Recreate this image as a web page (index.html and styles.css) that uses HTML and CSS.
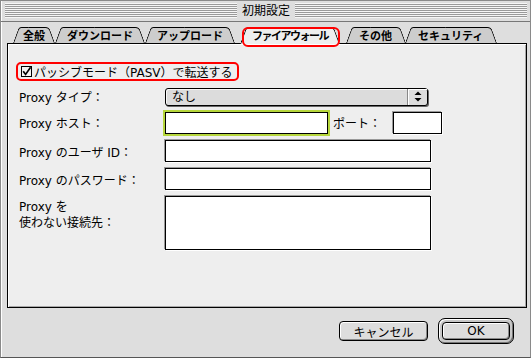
FILE: index.html
```html
<!DOCTYPE html>
<html lang="ja">
<head>
    <meta charset="UTF-8">
    <title>初期設定</title>
    <link rel="stylesheet" href="styles.css">
</head>
<body>
    <div class="window">
        <div class="titlebar">
            <div class="stripes"><span class="title">初期設定</span></div>
        </div>

        <div class="tabs">
            <div class="tab first">全般</div>
            <div class="tab">ダウンロード</div>
            <div class="tab">アップロード</div>
            <div class="tab active">ファイアウォール<span class="ring"></span></div>
            <div class="tab">その他</div>
            <div class="tab">セキュリティ</div>
        </div>

        <div class="panel">
            <label class="pasv">
                <svg class="check" width="11" height="11" viewBox="0 0 11 11">
                    <rect x="0.5" y="0.5" width="10" height="10" fill="#f4f4f4" stroke="#000"/>
                    <path d="M2.2 5.2 L4.6 8.4 L9.6 1.2" fill="none" stroke="#000" stroke-width="1.7"/>
                </svg>
                パッシブモード（PASV）で転送する
            </label>

            <div class="form">
                <div class="row row-popup">
                    <span class="label">Proxy タイプ：</span>
                    <div class="popup">
                        <span class="popup-text">なし</span>
                        <span class="popup-arrows">
                            <svg width="8" height="11" viewBox="0 0 8 11">
                                <polygon points="4,0.5 7.5,4 0.5,4" fill="#000"/>
                                <polygon points="0.5,7 7.5,7 4,10.5" fill="#000"/>
                            </svg>
                        </span>
                    </div>
                </div>
                <div class="row row-host">
                    <span class="label">Proxy ホスト：</span>
                    <div class="field field-host focused"></div>
                    <span class="port-label">ポート：</span>
                    <div class="field field-port"></div>
                </div>
                <div class="row row-field">
                    <span class="label">Proxy のユーザ ID：</span>
                    <div class="field field-wide"></div>
                </div>
                <div class="row row-field">
                    <span class="label">Proxy のパスワード：</span>
                    <div class="field field-wide"></div>
                </div>
                <div class="row row-area">
                    <span class="label label-area">Proxy を<br>使わない接続先：</span>
                    <div class="field field-wide field-area"></div>
                </div>
            </div>
        </div>

        <div class="buttons">
            <button class="btn btn-cancel">キャンセル</button>
            <div class="btn-default"><button class="btn btn-ok">OK</button></div>
        </div>
    </div>
</body>
</html>
```

FILE: styles.css
```css
body {
    margin: 0;
    font-family: "DejaVu Sans", "Noto Sans CJK JP", sans-serif;
    font-size: 12px;
    color: #000;
    background: #dedede;
}

.window {
    width: 531px;
    height: 358px;
    box-sizing: border-box;
    background: #dedede;
    border: 1px solid #8a8a8a;
    border-bottom-color: #555;
    box-shadow: inset 1px 0 0 #fff;
    display: flex;
    flex-direction: column;
}

/* Title bar */
.titlebar {
    height: 21px;
    box-sizing: border-box;
    padding: 2px 3px 3px 4px;
    border-bottom: 1px solid #777;
    display: flex;
}
.stripes {
    flex: 1;
    display: flex;
    justify-content: center;
    align-items: center;
    background: repeating-linear-gradient(to bottom, #f6f6f6 0 1px, #9a9a9a 1px 2px);
}
.title {
    background: #dedede;
    padding: 0 5px;
    line-height: 16px;
    font-size: 12px;
}

/* Tabs */
.tabs {
    display: flex;
    height: 16px;
    margin: 5px 0 0 12px;
}
.tab {
    position: relative;
    z-index: 0;
    height: 16px;
    padding: 0 12px;
    line-height: 17px;
    font-size: 11px;
    font-weight: bold;
    font-family: "Noto Sans CJK JP", sans-serif;
    white-space: nowrap;
}
.tab.first {
    padding: 0 10px;
}
.tab.active ~ .tab {
    padding: 0 13px;
}
.tab::before,
.tab::after {
    content: '';
    position: absolute;
    top: 0;
    bottom: 0;
    z-index: -1;
    background: #cdcdcd;
    border-top: 1px solid #000;
}
.tab::before {
    left: 0;
    right: 50%;
    border-left: 1px solid #000;
    transform: skewX(-20deg);
    transform-origin: bottom left;
    border-top-left-radius: 3px;
}
.tab::after {
    left: 50%;
    right: 0;
    border-right: 1px solid #000;
    transform: skewX(20deg);
    transform-origin: bottom right;
    border-top-right-radius: 4px;
}
.tab.active {
    z-index: 1;
    height: 17px;
    margin: 0 6px -1px 5px;
    align-self: flex-start;
    letter-spacing: -1.5px;
}
.tab.active::before,
.tab.active::after {
    background: #eeeeee;
}
.ring {
    position: absolute;
    left: 2px;
    right: 0;
    top: 0;
    bottom: -3px;
    border: 2px solid #f00;
    border-radius: 6px;
}

/* Panel */
.panel {
    height: 265px;
    box-sizing: border-box;
    margin: 0 3px 0 6px;
    padding: 18px 0 0 11px;
    background: #eeeeee;
    border: 1px solid #000;
    box-shadow: inset 1px 1px 0 #fff, inset -1px -1px 0 #a8a8a8;
}
.pasv {
    display: inline-flex;
    align-items: center;
    gap: 2px;
    height: 15px;
    margin-left: -3px;
    padding: 0 4px 0 3px;
    border: 2px solid #f00;
    border-radius: 5px;
    white-space: nowrap;
}
.check {
    display: block;
}

.form {
    display: flex;
    flex-direction: column;
    gap: 4px;
    margin-top: 6px;
}
.row {
    display: flex;
    align-items: center;
}
.row-popup {
    height: 19px;
}
.row-host {
    height: 25px;
}
.row-field {
    height: 24px;
}
.row-area {
    height: 55px;
    align-items: flex-start;
}
.label {
    width: 146px;
    flex: none;
    white-space: nowrap;
}
.label-area {
    padding-top: 4px;
    line-height: 16px;
}

.popup {
    display: flex;
    width: 263px;
    height: 18px;
    box-sizing: border-box;
    border: 1px solid #000;
    border-radius: 3px;
    background: #dcdcdc;
    box-shadow: 1px 1px 0 #666, inset 1px 1px 0 #f8f8f8;
}
.popup-text {
    flex: 1;
    padding-left: 6px;
    line-height: 16px;
}
.popup-arrows {
    width: 19px;
    display: flex;
    align-items: center;
    justify-content: center;
    border-left: 1px solid #888;
    box-shadow: inset 1px 1px 0 #fff;
}

.field {
    height: 22px;
    box-sizing: border-box;
    background: #fff;
    border: 1px solid #000;
    box-shadow: -1px -1px 0 #999, 1px 1px 0 #fff;
}
.field-host {
    width: 163px;
}
.focused {
    outline: 2px solid #b6d63c;
    box-shadow: none;
}
.port-label {
    width: 60px;
    margin-left: 5px;
}
.field-port {
    width: 49px;
}
.field-wide {
    width: 266px;
}
.field-area {
    height: 54px;
    margin-top: 1px;
}

/* Buttons */
.buttons {
    display: flex;
    justify-content: flex-end;
    align-items: center;
    gap: 10px;
    margin-top: 10px;
    padding-right: 16px;
}
.btn {
    font-family: "DejaVu Sans", "Noto Sans CJK JP", sans-serif;
    font-size: 12px;
    color: #000;
    background: #dddddd;
    border: 1px solid #000;
    border-radius: 4px;
    box-shadow: inset 1px 1px 0 #fff, inset -1px -1px 0 #8a8a8a;
    padding: 0;
}
.btn-cancel {
    width: 89px;
    height: 20px;
}
.btn-default {
    padding: 3px;
    border: 1px solid #000;
    border-radius: 7px;
    background: #c8c8c8;
    box-shadow: inset 1px 1px 0 #fff, inset -1px -1px 0 #777;
}
.btn-ok {
    display: block;
    width: 68px;
    height: 18px;
}
```
